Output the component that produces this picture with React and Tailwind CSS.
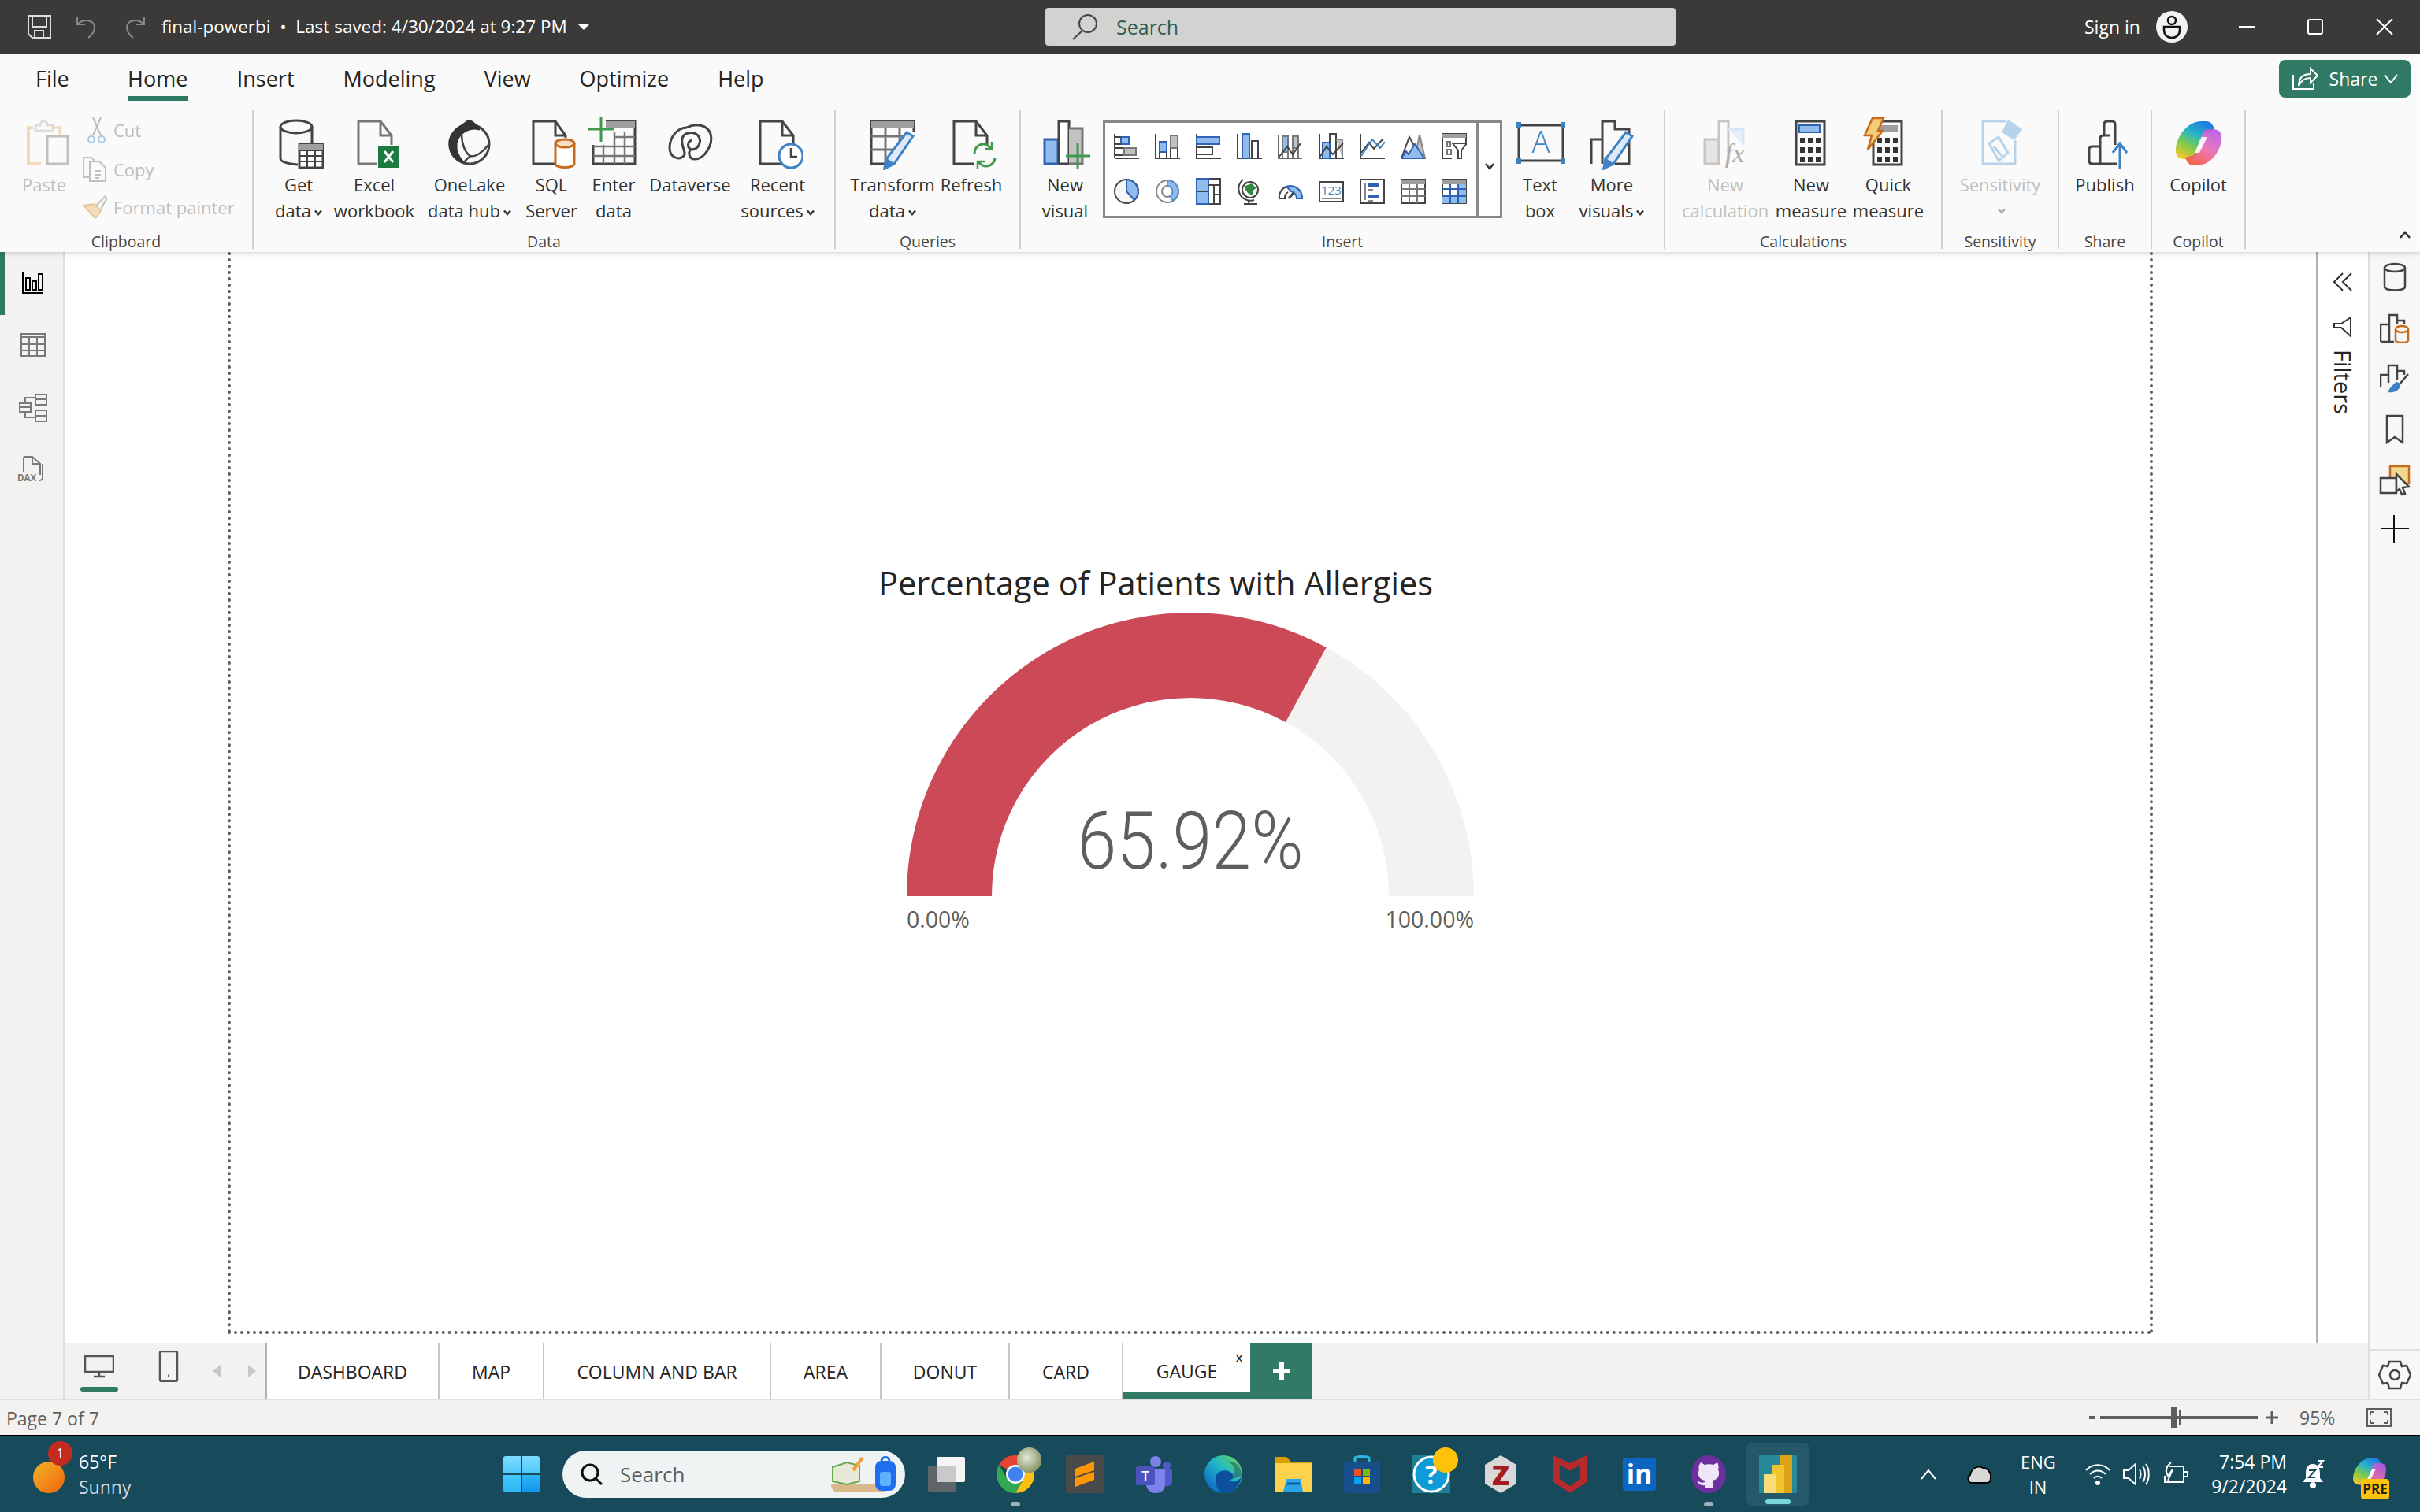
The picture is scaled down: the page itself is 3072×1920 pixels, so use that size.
const DK = "#444444";
const BL = "#2f62b5";
const LB = "#8fbcec";
const GR = "#c4c2c0";
const OR = "#c8691c";
const GN = "#3f9a4e";

function I({ children, w = 64, h = 68 }) {
    return (
        <svg width={w} height={h} viewBox={`0 0 ${w} ${h}`} fill="none" stroke={DK} strokeWidth="3" className="shrink-0">
            {children}
        </svg>
    );
}

const Doc = ({ x = 10, stroke = DK }) => (
    <path d={`M${x + 26} 60H${x}V6H${x + 28}L${x + 42} 24V36M${x + 28} 6V24H${x + 42}`} stroke={stroke} />
);

const Pencil = () => (
    <>
        <path d="M50 20L58 25L34 60L22 66L24 54Z" fill="#dbe9f8" stroke="#3e82c4" />
        <path d="M22 66L24 54L31 59Z" fill="#3e82c4" stroke="#3e82c4" />
    </>
);

function CopilotLogo({ id, size = 64 }) {
    return (
        <svg width={size} height={size} viewBox="0 0 64 64" className="shrink-0">
            <defs>
                <linearGradient id={`${id}a`} x1="0.7" y1="0" x2="0.2" y2="1">
                    <stop offset="0" stopColor="#1b7ce0" />
                    <stop offset="0.35" stopColor="#28b5c8" />
                    <stop offset="0.65" stopColor="#7ccb4c" />
                    <stop offset="1" stopColor="#f5c72a" />
                </linearGradient>
                <linearGradient id={`${id}b`} x1="0.8" y1="0" x2="0.3" y2="1">
                    <stop offset="0" stopColor="#b45ae8" />
                    <stop offset="0.5" stopColor="#ea6cb8" />
                    <stop offset="1" stopColor="#ef5a3c" />
                </linearGradient>
            </defs>
            <path d="M36 4H42C47 4 50 8 52 14L44 18C38 18 36 22 34 27L27 48C25 54 20 52 14 52C6 52 2 48 3 38C5 22 18 4 36 4Z" fill={`url(#${id}a)`} />
            <path d="M26 60C20 60 17 56 15 50L22 48C26 48 29 44 31 39L37 19C39 13 44 14 50 14C58 14 62 18 61 28C59 44 46 60 30 60Z" fill={`url(#${id}b)`} opacity="0.92" />
            <path d="M36 24H43L33 44H27Z" fill="#fff" opacity="0.9" />
        </svg>
    );
}

const GetDataIcon = () => (
    <I>
        <ellipse cx="29" cy="13" rx="20" ry="8" />
        <path d="M9 13V53C9 58 18 60 31 61M49 13V34" />
        <rect x="33" y="35" width="30" height="30" fill="#fff" />
        <rect x="33" y="35" width="30" height="8" fill="#a19f9d" stroke="none" />
        <path d="M33 43H63M33 50H63M33 57H63M43 43V65M53 43V65" strokeWidth="2" />
    </I>
);

const ExcelIcon = () => (
    <I>
        <path d="M35 60H12V6H40L54 24V36M40 6V24H54" stroke="#777" />
        <rect x="37" y="37" width="27" height="28" fill="#1f7a42" stroke="none" />
        <path d="M45 44L56 58M56 44L45 58" stroke="#fff" />
    </I>
);

const OneLakeIcon = () => (
    <I>
        <circle cx="32" cy="35" r="25" />
        <path d="M30 6C34 4 40 12 45 16C32 12 18 20 15 34C14 44 18 52 24 58C12 54 6 44 7 32C8 20 20 14 30 6Z" fill="#333" stroke="#333" />
        <path d="M22 22C22 34 26 46 33 50C40 52 50 44 56 36M34 50C30 52 26 56 26 58" strokeWidth="2.5" />
    </I>
);

const SqlIcon = () => (
    <I>
        <path d="M36 60H9V6H37L50 24V27M37 6V24H50" />
        <g stroke={OR}>
            <path d="M37 34V60C37 66 61 66 61 60V34" fill="#fff" />
            <ellipse cx="49" cy="34" rx="12" ry="5" fill="#f7e0c8" />
        </g>
    </I>
);

const EnterDataIcon = () => (
    <I>
        <path d="M6 36V60H59V6H22" />
        <rect x="22" y="6" width="37" height="8" fill="#a19f9d" stroke="none" />
        <path d="M6 38H59M6 50H59M19 36V60M33 20V60M46 20V60M33 26H59" stroke="#777" strokeWidth="2.5" />
        <path d="M0 16H32M16 1V32" stroke={GN} />
    </I>
);

const DataverseIcon = () => (
    <I>
        <path d="M28 14C38 8 54 10 58 22C62 36 50 54 38 54C30 54 30 46 32 42" />
        <path d="M28 14C16 14 6 26 6 40C6 52 18 56 24 50C28 46 20 38 22 28C24 20 36 18 42 24C48 32 42 42 34 42C28 40 28 32 34 30" />
    </I>
);

const RecentIcon = () => (
    <I>
        <Doc x={10} />
        <circle cx="49" cy="50" r="15" fill="#fff" stroke="#3e82c4" />
        <path d="M49 40V51H57" strokeWidth="2.5" />
    </I>
);

const TransformIcon = () => (
    <I>
        <path d="M22 60H5V6H59V20" />
        <rect x="5" y="6" width="54" height="8" fill="#a19f9d" stroke="none" />
        <path d="M5 25H50M5 42H36M23 14V58M41 14V36" stroke="#777" />
        <Pencil />
    </I>
);

const RefreshIcon = () => (
    <I>
        <Doc x={10} />
        <path d="M36 47C36 38 44 33 52 36L57 40M62 52C62 60 54 65 46 62L41 58" stroke={GN} fill="none" />
        <path d="M58 32V41H49M40 67V57H49" stroke={GN} strokeWidth="2.5" />
    </I>
);

const NewVisualIcon = () => (
    <I>
        <rect x="6" y="29" width="17" height="31" fill={LB} stroke={BL} />
        <path d="M24 60V6H37V60H24" fill="#fff" />
        <path d="M37 15H54V60H37" fill={GR} stroke="#777" />
        <path d="M48 34V66M33 50H64" stroke={GN} />
    </I>
);

const TextBoxIcon = () => (
    <I>
        <rect x="5" y="11" width="56" height="45" />
        <rect x="2" y="7" width="6" height="7" fill="#3e82c4" stroke="none" />
        <rect x="58" y="7" width="6" height="7" fill="#3e82c4" stroke="none" />
        <rect x="2" y="53" width="6" height="7" fill="#3e82c4" stroke="none" />
        <rect x="58" y="53" width="6" height="7" fill="#3e82c4" stroke="none" />
        <text x="33" y="46" textAnchor="middle" fontSize="38" fill="#3e82c4" stroke="none" fontFamily="Open Sans, sans-serif" fontWeight="300">A</text>
    </I>
);

const MoreVisualsIcon = () => (
    <I>
        <path d="M6 60V29H20M20 60V6H36V16H54V60H36" />
        <Pencil />
    </I>
);

const NewCalcIcon = () => (
    <I>
        <rect x="6" y="29" width="18" height="31" fill="#e6e5e4" stroke="#c8c6c4" />
        <path d="M24 60V6H36V60" stroke="#c8c6c4" />
        <path d="M36 16H55V36" stroke="#d8e4f2" fill="#e4eefa" />
        <text x="44" y="58" textAnchor="middle" fontSize="34" fontStyle="italic" fill="#b0aeac" stroke="none" fontFamily="Liberation Serif, serif">fx</text>
    </I>
);

const CalcKeys = () => (
    <g fill="#333" stroke="none">
        {[27, 39, 51].map((y) =>
            [18, 28, 38].map((x) => <rect key={`${x}-${y}`} x={x} y={y} width="6" height="7" />)
        )}
    </g>
);

const NewMeasureIcon = () => (
    <I>
        <rect x="13" y="6" width="36" height="55" />
        <rect x="17" y="11" width="26" height="9" fill={LB} stroke={BL} strokeWidth="2" />
        <CalcKeys />
    </I>
);

const QuickMeasureIcon = () => (
    <I>
        <rect x="13" y="6" width="36" height="55" />
        <rect x="22" y="11" width="22" height="8" fill="#a19f9d" stroke="none" />
        <CalcKeys />
        <path d="M12 2H26L19 18H25L6 42L11 24H2Z" fill="#f5cd78" stroke={OR} strokeWidth="2.5" />
    </I>
);

const SensitivityIcon = () => (
    <I>
        <path d="M40 6H10V60H51V30" stroke="#b7d3ec" />
        <path d="M30 26L18 34L30 56L42 46Z" stroke="#b7d3ec" />
        <path d="M24 38L34 50" stroke="#b7d3ec" />
        <path d="M42 4L60 16L50 30L34 20Z" fill="#b7d3ec" stroke="none" />
    </I>
);

const PublishIcon = () => (
    <I>
        <path d="M26 60H16C13 60 12 58 12 56V42C12 39 14 38 16 38H26M26 60V28C26 25 28 24 30 24H38M31 24V10C31 7 33 6 35 6H41C44 6 45 8 45 10V36M16 60H48" />
        <path d="M51 66V34M42 46L51 34L60 46" stroke="#3e82c4" />
    </I>
);

const PasteIcon = () => (
    <I>
        <path d="M18 14H12V60H28" stroke="#f3d9b8" strokeWidth="4" />
        <path d="M36 14H52V24" stroke="#f3d9b8" strokeWidth="3" />
        <path d="M21 18V11H27C27 4 36 4 36 11H43V18Z" fill="#fafafa" stroke="#ddd" />
        <rect x="36" y="25" width="26" height="35" stroke="#c2c0be" fill="#fafafa" />
    </I>
);

function G({ children }) {
    return (
        <svg width="32" height="34" viewBox="0 0 32 34" fill="none" stroke={DK} strokeWidth="2" className="shrink-0">
            {children}
        </svg>
    );
}

const galleryIcons = [
    <G key="1">
        <path d="M1 2V33M1 33H32" />
        <rect x="9" y="6" width="10" height="9" fill={LB} stroke={BL} />
        <path d="M1 6H9M1 15H9M1 20H13M1 29H13" />
        <rect x="13" y="20" width="15" height="9" fill={GR} stroke="#777" />
    </G>,
    <G key="2">
        <path d="M1 2V33H32" />
        <rect x="6" y="12" width="9" height="13" fill={LB} stroke={BL} />
        <path d="M6 25V33M15 25V33" />
        <rect x="20" y="4" width="9" height="16" fill={GR} stroke="#777" />
        <path d="M20 20V33M29 20V33" />
    </G>,
    <G key="3">
        <path d="M1 2V33H32" />
        <rect x="1" y="6" width="29" height="9" fill={LB} stroke={BL} />
        <path d="M1 19H21V28H1" />
    </G>,
    <G key="4">
        <path d="M1 2V33H32" />
        <rect x="7" y="2" width="9" height="31" fill={LB} stroke={BL} />
        <path d="M19 33V11H27V33" />
    </G>,
    <G key="5">
        <path d="M1 3V33H31" stroke="#666" />
        <rect x="6" y="5" width="7" height="20" fill={LB} stroke="#777" />
        <rect x="19" y="5" width="7" height="15" fill={GR} stroke="#777" />
        <path d="M6 25V33M13 25V33M19 20V33M26 20V33" stroke="#777" />
        <path d="M1 32L12 18L19 28L29 14" />
    </G>,
    <G key="6">
        <path d="M1 2V33H32" />
        <rect x="5" y="13" width="9" height="20" fill={LB} stroke={BL} />
        <path d="M14 13V2H22V33" />
        <path d="M22 9H30V33" fill={GR} stroke="#888" />
        <path d="M1 32L10 18L18 28L31 14" />
    </G>,
    <G key="7">
        <path d="M1 2V33H32" />
        <path d="M2 26L12 13L18 21L30 8" />
        <path d="M2 30L16 9L26 20L32 12" stroke="#3e82c4" />
    </G>,
    <G key="8">
        <path d="M24 3L31 33H18Z" fill={GR} stroke="#888" />
        <path d="M1 33L11 6L22 26L24 33Z" fill="#fff" />
        <path d="M1 33L7 24L10 28L18 15L30 33Z" fill={LB} stroke={BL} />
    </G>,
    <G key="9">
        <path d="M13 33H1V2H31V14" />
        <rect x="1" y="2" width="30" height="5" fill="#a19f9d" stroke="none" />
        <path d="M7 12H11V18H7ZM7 22H12V28H7Z" stroke="#777" />
        <path d="M14 14H32L25 23V33H21V23Z" fill="#fff" />
    </G>,
    <G key="10">
        <circle cx="16" cy="17" r="15" fill="#f8f8f8" />
        <path d="M16 2A15 15 0 0 1 26 28L16 17Z" fill={LB} stroke={BL} />
    </G>,
    <G key="11">
        <circle cx="16" cy="17" r="14" fill="#fff" stroke="#888" />
        <circle cx="16" cy="17" r="7" fill="#fff" stroke="#888" />
        <path d="M16 3A14 14 0 0 1 23 29L19 23A7 7 0 0 0 16 10Z" fill={LB} stroke="#5e8fc9" />
    </G>,
    <G key="12">
        <rect x="1" y="1" width="30" height="32" />
        <rect x="1" y="1" width="15" height="32" fill={LB} stroke={BL} />
        <path d="M1 17H16M16 9H31M23 9V33M23 21H31" />
    </G>,
    <G key="13">
        <path d="M8 2A15 15 0 0 0 22 28M9 33H26M15 29V33" />
        <circle cx="17" cy="15" r="10" fill="#fff" />
        <path d="M11 10L19 7L25 13L20 16L21 22L15 20L11 15Z" fill="#2f8a40" stroke="none" />
    </G>,
    <G key="14">
        <path d="M2 26A14 14 0 0 1 11 11" fill="none" />
        <path d="M11 11A15 15 0 0 1 31 26H24A9 9 0 0 0 17 17Z" fill={LB} stroke={BL} />
        <path d="M2 26H9A8 8 0 0 1 13 18" />
        <path d="M14 26L20 19" strokeWidth="3" />
    </G>,
    <G key="15">
        <rect x="1" y="5" width="30" height="25" />
        <path d="M4 26H28" stroke="#888" />
        <text x="16" y="21" textAnchor="middle" fontSize="15" fill="#3e82c4" stroke="none" fontFamily="Open Sans, sans-serif">123</text>
    </G>,
    <G key="16">
        <rect x="1" y="2" width="30" height="30" />
        <path d="M7 6V28" stroke="#888" />
        <path d="M10 9H25M10 23H25" stroke={BL} strokeWidth="4" />
        <path d="M10 15H17M10 29H17" stroke="#888" />
    </G>,
    <G key="17">
        <rect x="1" y="2" width="30" height="30" />
        <rect x="1" y="2" width="30" height="6" fill="#a19f9d" stroke="none" />
        <path d="M1 14H31M1 23H31M11 8V32M21 8V32" stroke="#777" />
    </G>,
    <G key="18">
        <rect x="1" y="2" width="30" height="30" />
        <rect x="1" y="2" width="30" height="6" fill="#a19f9d" stroke="none" />
        <rect x="21" y="8" width="10" height="24" fill={LB} stroke="none" />
        <rect x="1" y="23" width="30" height="9" fill={LB} stroke="none" />
        <path d="M1 14H31M1 23H31M11 8V32M21 8V32" stroke={BL} />
    </G>,
];

function Chev({ color = "#333" }) {
    return (
        <svg width="10" height="8" viewBox="0 0 10 8" fill="none" stroke={color} strokeWidth="2.5" className="ml-1 inline-block">
            <path d="M1 1.5L5 6L9 1.5" />
        </svg>
    );
}

function RibbonBtn({ w, icon, line1, line2, caret, disabled }) {
    return (
        <div className={`flex flex-col items-center shrink-0 pt-2 text-[22px] leading-[33px] whitespace-nowrap ${disabled ? "text-[#c0bebc]" : "text-[#323130]"}`} style={{ width: w }}>
            {icon}
            <div className="mt-[2px]">{line1}</div>
            <div>
                {line2}
                {caret && <Chev />}
            </div>
        </div>
    );
}

function Group({ w, label, children, className = "" }) {
    return (
        <div className="flex flex-col h-[176px] shrink-0 border-r-2 border-[#d2d0ce]" style={{ width: w }}>
            <div className={`flex h-[150px] ${className}`}>{children}</div>
            <div className="h-[26px] text-center text-[19.5px] leading-[34px] text-[#484644] whitespace-nowrap">{label}</div>
        </div>
    );
}

function ClipRow({ icon, label, h = "h-[50px]" }) {
    return (
        <div className={`flex items-center ${h} text-[22px] text-[#c0bebc] whitespace-nowrap`}>
            <div className="w-[40px] flex">{icon}</div>
            {label}
        </div>
    );
}

function TitleBar() {
    return (
        <div className="flex items-center h-[68px] bg-[#3b3a39] text-white shrink-0">
            <div className="flex items-center w-[1327px] shrink-0">
                <svg width="30" height="30" viewBox="0 0 30 30" fill="none" stroke="#ddd" strokeWidth="2" className="ml-[35px]">
                    <path d="M1 1H29V29H6L1 24ZM6 1V15H24V1M9 29V20H20V29" />
                </svg>
                <svg width="28" height="30" viewBox="0 0 28 30" fill="none" stroke="#8a8886" strokeWidth="2" className="ml-[31px]">
                    <path d="M2 2V12H12M2 12C10 4 24 6 24 16C24 22 20 26 16 29" />
                </svg>
                <svg width="28" height="30" viewBox="0 0 28 30" fill="none" stroke="#8a8886" strokeWidth="2" className="ml-[33px]">
                    <path d="M26 2V12H16M26 12C18 4 4 6 4 16C4 22 8 26 12 29" />
                </svg>
                <span className="ml-[20px] text-[22.5px] whitespace-nowrap">final-powerbi&nbsp;&nbsp;•&nbsp;&nbsp;Last saved: 4/30/2024 at 9:27 PM</span>
                <svg width="16" height="8" viewBox="0 0 16 8" className="ml-[13px]">
                    <path d="M0 0H16L8 8Z" fill="#fff" />
                </svg>
            </div>
            <div className="flex items-center w-[800px] h-[48px] bg-[#d2d2d0] rounded-[4px] shrink-0">
                <svg width="36" height="34" viewBox="0 0 36 34" fill="none" stroke="#444" strokeWidth="2" className="ml-[32px]">
                    <circle cx="22" cy="13" r="11" />
                    <path d="M15 22L3 33" />
                </svg>
                <span className="ml-[22px] mt-[2px] text-[25px] text-[#2f5f50]">Search</span>
            </div>
            <div className="flex items-center flex-1 text-[23px]">
                <span className="ml-[519px] whitespace-nowrap">Sign in</span>
                <div className="ml-[20px] w-[40px] h-[40px] rounded-full bg-[#f3f2f1] flex items-center justify-center shrink-0">
                    <svg width="24" height="32" viewBox="0 0 24 32" fill="none" stroke="#111" strokeWidth="2.5">
                        <circle cx="12" cy="8" r="5" />
                        <path d="M2 16H22V20C22 26 18 30 12 30C6 30 2 26 2 20Z" />
                    </svg>
                </div>
                <svg width="20" height="3" viewBox="0 0 20 3" className="ml-[65px]"><rect width="20" height="3" fill="#fff" /></svg>
                <svg width="20" height="20" viewBox="0 0 20 20" fill="none" stroke="#fff" strokeWidth="2" className="ml-[67px]"><rect x="1" y="1" width="18" height="18" rx="2" /></svg>
                <svg width="22" height="22" viewBox="0 0 22 22" fill="none" stroke="#fff" strokeWidth="2" className="ml-[67px]"><path d="M1 1L21 21M21 1L1 21" /></svg>
            </div>
        </div>
    );
}

function MenuRow() {
    return (
        <div className="flex h-[72px] items-start relative">
            <div className="flex items-start pt-[14px] pl-[45px] gap-[62px] text-[27px] leading-[36px] text-[#252423]">
                <span>File</span>
                <div className="flex flex-col items-center ml-[12px]">
                    <span className="font-medium">Home</span>
                    <div className="w-[77px] h-[6px] mt-[4px] bg-[#2f7a65]" />
                </div>
                <span>Insert</span>
                <span>Modeling</span>
                <span>View</span>
                <span>Optimize</span>
                <span>Help</span>
            </div>
            <div className="ml-auto mt-[8px] mr-[12px] w-[167px] h-[48px] rounded-[8px] bg-[#317a65] flex items-center justify-center text-white text-[23px]">
                <svg width="34" height="30" viewBox="0 0 34 30" fill="none" stroke="#fff" strokeWidth="2" className="mr-[14px]">
                    <path d="M2 10V28H28V20M9 24C9 14 14 9 24 9V2L33 11L24 20V14C17 14 12 17 9 24Z" />
                </svg>
                Share
                <svg width="18" height="12" viewBox="0 0 18 12" fill="none" stroke="#fff" strokeWidth="2" className="ml-[8px]">
                    <path d="M1 1L9 11L17 1" />
                </svg>
            </div>
        </div>
    );
}

function Ribbon() {
    return (
        <div className="relative z-10 h-[252px] bg-[#fafafa] shadow-[0_2px_6px_rgba(0,0,0,0.16)] shrink-0">
            <MenuRow />
            <div className="flex">
                <Group w={322} label="Clipboard" className="pl-[18px]">
                    <RibbonBtn w={76} icon={<PasteIcon />} line1="Paste" disabled />
                    <div className="flex flex-col ml-[10px]">
                        <ClipRow
                            label="Cut"
                            icon={
                                <svg width="26" height="34" viewBox="0 0 26 34" fill="none" stroke="#bbb" strokeWidth="2" className="ml-[6px]">
                                    <path d="M8 1L18 24M18 1L8 24" />
                                    <circle cx="6" cy="29" r="4" stroke="#a9c8e8" />
                                    <circle cx="19" cy="29" r="4" stroke="#a9c8e8" />
                                </svg>
                            }
                        />
                        <ClipRow
                            label="Copy"
                            icon={
                                <svg width="32" height="32" viewBox="0 0 32 32" fill="none" stroke="#c2c0be" strokeWidth="2">
                                    <path d="M10 26H2V1H12L16 5M10 6H22L30 14V31H10Z" />
                                    <path d="M16 18H24M16 23H24M16 27H22" />
                                </svg>
                            }
                        />
                        <ClipRow
                            h="h-[46px]"
                            label="Format painter"
                            icon={
                                <svg width="32" height="30" viewBox="0 0 32 30" fill="none" stroke="#c2c0be" strokeWidth="2">
                                    <path d="M30 1L17 14L23 19L31 5Z" />
                                    <path d="M2 13L16 11L24 20L17 29Z" fill="#f5dcbc" stroke="#e8c59c" />
                                </svg>
                            }
                        />
                    </div>
                </Group>
                <Group w={739} label="Data" className="pl-[8px]">
                    <RibbonBtn w={98} icon={<GetDataIcon />} line1="Get" line2="data" caret />
                    <RibbonBtn w={94} icon={<ExcelIcon />} line1="Excel" line2="workbook" />
                    <RibbonBtn w={148} icon={<OneLakeIcon />} line1="OneLake" line2="data hub" caret />
                    <RibbonBtn w={60} icon={<SqlIcon />} line1="SQL" line2="Server" />
                    <RibbonBtn w={98} icon={<EnterDataIcon />} line1="Enter" line2="data" />
                    <RibbonBtn w={96} icon={<DataverseIcon />} line1="Dataverse" />
                    <RibbonBtn w={126} icon={<RecentIcon />} line1="Recent" line2="sources" caret />
                </Group>
                <Group w={235} label="Queries">
                    <RibbonBtn w={144} icon={<TransformIcon />} line1="Transform" line2="data" caret />
                    <RibbonBtn w={56} icon={<RefreshIcon />} line1="Refresh" />
                </Group>
                <Group w={818} label="Insert" className="pl-[8px]">
                    <RibbonBtn w={96} icon={<NewVisualIcon />} line1="New" line2="visual" />
                    <div className="flex mt-[13px] w-[507px] h-[124px] border-[3px] border-[#8a8886] bg-white shrink-0">
                        <div className="grid grid-cols-[repeat(9,52px)] grid-rows-[58px_58px] w-[471px] pl-px items-center justify-items-center">
                            {galleryIcons}
                        </div>
                        <div className="flex-1 border-l-[3px] border-[#8a8886] flex items-center justify-center pb-2">
                            <svg width="14" height="10" viewBox="0 0 14 10" fill="none" stroke="#333" strokeWidth="2.5"><path d="M2 2L7 8L12 2" /></svg>
                        </div>
                    </div>
                    <RibbonBtn w={96} icon={<TextBoxIcon />} line1="Text" line2="box" />
                    <RibbonBtn w={86} icon={<MoreVisualsIcon />} line1="More" line2="visuals" caret />
                </Group>
                <Group w={352} label="Calculations">
                    <RibbonBtn w={152} icon={<NewCalcIcon />} line1="New" line2="calculation" disabled />
                    <RibbonBtn w={66} icon={<NewMeasureIcon />} line1="New" line2="measure" />
                    <RibbonBtn w={130} icon={<QuickMeasureIcon />} line1="Quick" line2="measure" />
                </Group>
                <Group w={148} label="Sensitivity">
                    <div className="flex flex-col items-center w-full pt-2 text-[22px] leading-[33px] text-[#c0bebc]">
                        <SensitivityIcon />
                        <div className="mt-[2px]">Sensitivity</div>
                        <div className="h-[33px] flex items-center"><Chev color="#b0aeac" /></div>
                    </div>
                </Group>
                <Group w={118} label="Share">
                    <RibbonBtn w={116} icon={<PublishIcon />} line1="Publish" />
                </Group>
                <Group w={119} label="Copilot">
                    <RibbonBtn w={117} icon={<div className="h-[68px] pt-[2px]"><CopilotLogo id="cp1" /></div>} line1="Copilot" />
                </Group>
                <div className="flex-1 flex justify-end items-end pr-[11px] pb-[12px] h-[176px]">
                    <svg width="16" height="12" viewBox="0 0 16 12" fill="none" stroke="#333" strokeWidth="2.5"><path d="M2 10L8 3L14 10" /></svg>
                </div>
            </div>
        </div>
    );
}

function LeftRail() {
    return (
        <div className="w-[82px] shrink-0 border-r-2 border-[#e1dfdd] bg-[#f3f2f1] flex flex-col">
            <div className="h-[80px] border-l-[6px] border-[#2f7a65] flex items-center pl-[22px]">
                <svg width="28" height="28" viewBox="0 0 28 28" fill="none" stroke="#000" strokeWidth="2">
                    <path d="M1 0V26H27M5 7H10V22H5ZM13 11H18V22H13ZM21 2H26V22H21Z" />
                </svg>
            </div>
            <div className="h-[80px] flex items-center pl-[26px] -mt-[2px]">
                <svg width="32" height="30" viewBox="0 0 32 30" fill="none" stroke="#7a7977" strokeWidth="2">
                    <rect x="1" y="1" width="30" height="28" />
                    <path d="M1 5H31M1 14H31M1 22H31M11 5V29M21 5V29" />
                </svg>
            </div>
            <div className="h-[80px] flex items-center pl-[24px]">
                <svg width="36" height="36" viewBox="0 0 36 36" fill="none" stroke="#7a7977" strokeWidth="2">
                    <path d="M1 12H15V23H1ZM1 17H15M21 1H35V14H21ZM21 7H35M21 21H35V35H21ZM21 28H35M8 12V5H21M8 23V30H21" />
                </svg>
            </div>
            <div className="h-[80px] flex items-center pl-[21px]">
                <svg width="38" height="38" viewBox="0 0 38 38" fill="none" stroke="#7a7977" strokeWidth="2">
                    <path d="M9 20V3C9 2 10 1 11 1H20L30 10V24M20 1V10H30M33 10V28C33 30 31 31 28 31" />
                    <text x="1" y="32" fontSize="11.5" fontWeight="700" fill="#7a7977" stroke="none" fontFamily="Open Sans, sans-serif">DAX</text>
                </svg>
            </div>
        </div>
    );
}

function GaugeChart() {
    return (
        <div className="flex flex-col items-center w-[720px]">
            <div className="mr-[88px] text-[41.6px] leading-[56px] text-[#252423] whitespace-nowrap">Percentage of Patients with Allergies</div>
            <div className="relative mt-[10px] w-[720px] h-[360px]">
                <svg width="720" height="360" viewBox="0 0 720 360">
                    <path d="M0 360A360 360 0 0 1 720 360H612A252 252 0 0 0 108 360Z" fill="#f3f2f1" />
                    <path d="M0 360A360 360 0 0 1 532.6 44.2L480.9 139A252 252 0 0 0 108 360Z" fill="#cc4a58" />
                </svg>
                <div className="absolute inset-x-0 top-[230px] text-center text-[102px] leading-[120px] font-light text-[#605e5c] font-['Roboto',sans-serif] scale-x-[0.88]">65.92%</div>
            </div>
            <div className="flex justify-between w-full mt-[11px] text-[28.5px] leading-[36px] text-[#605e5c]">
                <span>0.00%</span>
                <span>100.00%</span>
            </div>
        </div>
    );
}

function FilterPanel() {
    return (
        <div className="w-[66px] shrink-0 border-l-2 border-[#b3b0ad] bg-white flex flex-col items-center pt-[26px]">
            <svg width="24" height="24" viewBox="0 0 24 24" fill="none" stroke="#333" strokeWidth="2">
                <path d="M12 1L1 12L12 23M23 1L12 12L23 23" />
            </svg>
            <svg width="24" height="26" viewBox="0 0 24 26" fill="none" stroke="#333" strokeWidth="2" className="mt-[32px]">
                <path d="M22 1V25L10 14H1V9H10Z" />
            </svg>
            <div className="mt-[16px] text-[29px] font-medium text-[#252423] [writing-mode:vertical-rl] leading-[29px]">Filters</div>
        </div>
    );
}

function RightRail() {
    return (
        <div className="w-[66px] shrink-0 border-l-2 border-[#e1dfdd] bg-[#f8f7f6] flex flex-col items-center">
            <svg width="30" height="38" viewBox="0 0 30 38" fill="none" stroke="#444" strokeWidth="2.5" className="mt-[13px]">
                <ellipse cx="15" cy="7" rx="13" ry="5" />
                <path d="M2 7V31C2 37 28 37 28 31V7" />
            </svg>
            <svg width="38" height="38" viewBox="0 0 38 38" fill="none" stroke="#444" strokeWidth="2.5" className="mt-[27px]">
                <path d="M1 36V14H12M12 36V2H22V14M1 36H18M22 9H31V13" />
                <ellipse cx="28" cy="20" rx="8" ry="4" stroke={OR} />
                <path d="M20 20V34C20 38 36 38 36 34V20" stroke={OR} />
            </svg>
            <svg width="38" height="38" viewBox="0 0 38 38" fill="none" stroke="#444" strokeWidth="2.5" className="mt-[26px]">
                <path d="M1 30V14H11M11 24V2H22V20M22 9H31V14" />
                <path d="M36 13L24 27" />
                <path d="M12 35C18 35 24 33 25 26L21 24C18 28 14 30 12 35Z" fill="#3e82c4" stroke="#3e82c4" />
            </svg>
            <svg width="24" height="38" viewBox="0 0 24 38" fill="none" stroke="#444" strokeWidth="2.5" className="mt-[26px]">
                <path d="M2 2H22V36L12 29L2 36Z" />
            </svg>
            <svg width="40" height="40" viewBox="0 0 40 40" fill="none" stroke="#444" strokeWidth="2.5" className="mt-[26px]">
                <rect x="14" y="2" width="24" height="22" fill="#f3d98f" stroke={OR} />
                <rect x="2" y="17" width="20" height="19" fill="#f8f7f6" />
                <path d="M22 12L38 28L30 29L33 37L29 38L26 31L22 34Z" fill="#f8f7f6" />
            </svg>
            <svg width="36" height="36" viewBox="0 0 36 36" stroke="#111" strokeWidth="2" className="mt-[24px]">
                <path d="M0 17H36M17 0V36" />
            </svg>
            <div className="mt-auto w-full h-[63px] border-t-2 border-[#e1dfdd] flex items-center justify-center">
                <svg width="42" height="38" viewBox="0 0 42 38" fill="none" stroke="#444" strokeWidth="2.5">
                    <path d="M14 2H28L30 8L36 7L41 19L36 30L30 29L28 36H14L12 29L6 30L1 19L6 7L12 8Z" />
                    <circle cx="21" cy="19" r="6" />
                </svg>
            </div>
        </div>
    );
}

const tabs = [
    ["DASHBOARD", 219],
    ["MAP", 133],
    ["COLUMN AND BAR", 288],
    ["AREA", 140],
    ["DONUT", 163],
    ["CARD", 144],
];

function TabsRow() {
    return (
        <div className="flex h-[70px] shrink-0 bg-[#f3f2f1]">
            <div className="w-[255px] flex items-start shrink-0">
                <div className="ml-[20px] w-[48px] flex flex-col items-center mt-[14px]">
                    <svg width="38" height="30" viewBox="0 0 38 30" fill="none" stroke="#555" strokeWidth="2.5">
                        <path d="M1 2H37V22H1ZM19 22V28M12 28H26" />
                    </svg>
                    <div className="w-[48px] h-[6px] mt-[11px] rounded-full bg-[#317a65]" />
                </div>
                <svg width="26" height="40" viewBox="0 0 26 40" fill="none" stroke="#555" strokeWidth="2.5" className="ml-[51px] mt-[9px]">
                    <rect x="2" y="1" width="22" height="38" rx="2" />
                    <path d="M12 32H14" strokeWidth="3" />
                </svg>
                <svg width="10" height="16" viewBox="0 0 10 16" className="ml-[43px] mt-[27px]"><path d="M10 0V16L0 8Z" fill="#c8c6c4" /></svg>
                <svg width="10" height="16" viewBox="0 0 10 16" className="ml-[35px] mt-[27px]"><path d="M0 0V16L10 8Z" fill="#c8c6c4" /></svg>
            </div>
            <div className="flex h-full bg-white border-l-2 border-[#b3b0ad]">
                {tabs.map(([name, w]) => (
                    <div key={name} className="flex items-center justify-center pt-[2px] border-r-2 border-[#c8c6c4] text-[23px] text-[#252423] whitespace-nowrap" style={{ width: w }}>
                        {name}
                    </div>
                ))}
                <div className="relative w-[161px] flex items-center justify-center pt-[8px] border-b-[8px] border-b-[#317a65] text-[23px] text-[#252423] font-medium">
                    GAUGE
                    <span className="absolute right-[9px] top-[5px] text-[19px] font-medium leading-[24px]">x</span>
                </div>
            </div>
            <div className="w-[79px] bg-[#317a65] flex items-center justify-center">
                <svg width="22" height="22" viewBox="0 0 22 22" stroke="#fff" strokeWidth="6"><path d="M0 11H22M11 0V22" /></svg>
            </div>
        </div>
    );
}

function StatusBar() {
    return (
        <div className="flex items-center h-[46px] shrink-0 border-t-2 border-[#e1dfdd] bg-[#f3f2f1] text-[23px] text-[#605e5c]">
            <span className="ml-[8px] mt-[2px]">Page 7 of 7</span>
            <div className="ml-auto flex items-center">
                <div className="w-[8px] h-[4px] bg-[#605e5c]" />
                <div className="relative ml-[6px] w-[200px] h-[4px] bg-[#605e5c]">
                    <div className="absolute left-[90px] top-[-11px] w-[8px] h-[26px] bg-[#605e5c]" />
                    <div className="absolute left-[100px] top-[-8px] w-[2px] h-[20px] bg-[#605e5c]" />
                </div>
                <svg width="16" height="16" viewBox="0 0 16 16" stroke="#605e5c" strokeWidth="3" className="ml-[10px]"><path d="M0 8H16M8 0V16" /></svg>
                <span className="ml-[27px] w-[46px]">95%</span>
                <svg width="32" height="24" viewBox="0 0 32 24" fill="none" stroke="#605e5c" strokeWidth="2" className="ml-[39px] mr-[36px]">
                    <rect x="1" y="1" width="30" height="22" />
                    <path d="M5 9V5H10M22 5H27V9M27 15V19H22M10 19H5V15" />
                </svg>
            </div>
        </div>
    );
}

const Chrome = () => (
    <svg width="48" height="48" viewBox="0 0 48 48">
        <path d="M3.2 12A24 24 0 0 1 44.8 12H24A12 12 0 0 0 13.6 18Z" fill="#e94335" />
        <path d="M44.8 12A24 24 0 0 1 24 48L34.4 30A12 12 0 0 0 24 12Z" fill="#fbc012" />
        <path d="M24 48A24 24 0 0 1 3.2 12L13.6 30A12 12 0 0 0 34.4 30Z" fill="#32a853" />
        <circle cx="24" cy="24" r="12" fill="#fff" />
        <circle cx="24" cy="24" r="9.5" fill="#3f82f0" />
    </svg>
);

const taskIcons = [
    {
        key: "taskview",
        el: (
            <svg width="48" height="48" viewBox="0 0 48 48">
                <rect x="12" y="2" width="36" height="32" rx="2" fill="#f5f5f5" />
                <rect x="1" y="14" width="36" height="32" rx="2" fill="#6a6a6a" fillOpacity="0.85" />
                <rect x="12" y="14" width="25" height="20" fill="#c9c9c9" />
            </svg>
        ),
    },
    {
        key: "chrome",
        el: (
            <div className="relative">
                <Chrome />
                <div className="absolute left-[26px] top-[-10px] w-[31px] h-[32px] rounded-full bg-[radial-gradient(circle_at_40%_40%,#e2e6d8,#68793f)]" />
            </div>
        ),
        dot: true,
    },
    {
        key: "sublime",
        el: (
            <svg width="48" height="48" viewBox="0 0 48 48">
                <rect width="48" height="48" rx="3" fill="#4a4a4a" />
                <path d="M36 8V19L12 27V17ZM12 29L36 21V31L12 40Z" fill="#ff9800" />
            </svg>
        ),
    },
    {
        key: "teams",
        el: (
            <svg width="48" height="48" viewBox="0 0 48 48">
                <circle cx="26" cy="8" r="7" fill="#7b83eb" />
                <circle cx="40" cy="13" r="5" fill="#5059c9" />
                <path d="M33 18H47V33C47 38 42 40 38 39Z" fill="#5059c9" />
                <path d="M14 18H38V37C38 44 33 48 26 48C19 48 14 43 14 37Z" fill="#7b83eb" />
                <rect x="1" y="14" width="24" height="24" rx="2" fill="#4b53bc" />
                <text x="13" y="32" textAnchor="middle" fontSize="17" fontWeight="600" fill="#fff" fontFamily="Open Sans, sans-serif">T</text>
            </svg>
        ),
    },
    {
        key: "edge",
        el: (
            <svg width="48" height="48" viewBox="0 0 48 48">
                <defs>
                    <linearGradient id="edg" x1="0.9" y1="0" x2="0.1" y2="0.8">
                        <stop offset="0" stopColor="#6cd45a" />
                        <stop offset="0.5" stopColor="#1fb6c8" />
                        <stop offset="1" stopColor="#0f6fc4" />
                    </linearGradient>
                </defs>
                <circle cx="24" cy="24" r="24" fill="url(#edg)" />
                <path d="M14 30C14 18 30 16 36 24C38 28 34 32 30 32C40 36 46 30 47 26C46 38 36 48 24 48C18 48 14 40 14 30Z" fill="#0c4f9c" />
                <path d="M47 26C47 12 37 6 28 8C36 10 40 16 38 24C36 30 32 33 30 32Z" fill="#174a5b" fillOpacity="0.5" />
            </svg>
        ),
    },
    {
        key: "explorer",
        el: (
            <svg width="48" height="48" viewBox="0 0 48 48">
                <path d="M1 2H16L22 8H48V47H1Z" fill="#d99f00" />
                <path d="M1 10H48V46H1Z" fill="#ffd24d" />
                <path d="M16 30H34L37 46H12Z" fill="#29a4e8" />
                <path d="M17 36H33" stroke="#0b5c9c" strokeWidth="3" />
            </svg>
        ),
    },
    {
        key: "store",
        el: (
            <svg width="48" height="48" viewBox="0 0 48 48">
                <path d="M15 10V3C15 1 33 1 33 3V10" fill="none" stroke="#2ab7e8" strokeWidth="3" />
                <path d="M1 8H47V43C47 46 45 48 42 48H6C3 48 1 46 1 43Z" fill="#174f8c" />
                <rect x="14" y="17" width="9" height="9" fill="#f25022" />
                <rect x="25" y="17" width="9" height="9" fill="#7fba00" />
                <rect x="14" y="28" width="9" height="9" fill="#00a4ef" />
                <rect x="25" y="28" width="9" height="9" fill="#ffb900" />
            </svg>
        ),
    },
    {
        key: "help",
        el: (
            <div className="relative">
                <svg width="48" height="48" viewBox="0 0 48 48">
                    <rect width="48" height="48" fill="#1f7f97" />
                    <circle cx="24" cy="24" r="22" fill="#0f9bd7" stroke="#fff" strokeWidth="3" />
                    <text x="24" y="36" textAnchor="middle" fontSize="32" fontWeight="700" fill="#fff" fontFamily="Open Sans, sans-serif">?</text>
                </svg>
                <div className="absolute left-[26px] top-[-10px] w-[32px] h-[32px] rounded-full bg-[#ffc20a]" />
            </div>
        ),
    },
    {
        key: "zip",
        el: (
            <svg width="40" height="48" viewBox="0 0 40 48">
                <path d="M20 0L40 12V36L20 48L0 36V12Z" fill="#d8d8d8" />
                <text x="20" y="38" textAnchor="middle" fontSize="36" fontWeight="800" fill="#a61c1c" fontFamily="Open Sans, sans-serif">Z</text>
            </svg>
        ),
    },
    {
        key: "mcafee",
        el: (
            <svg width="42" height="48" viewBox="0 0 42 48">
                <path d="M0 0L21 10L42 0V34L21 48L0 34ZM8 12V30L21 39L34 30V12L21 20Z" fill="#b52b2b" fillRule="evenodd" />
            </svg>
        ),
    },
    {
        key: "linkedin",
        el: (
            <div className="w-[42px] h-[42px] rounded-[3px] bg-[#0a66c2] text-white text-[34px] leading-[40px] font-bold text-center font-['Open_Sans',sans-serif]">in</div>
        ),
    },
    {
        key: "github",
        el: (
            <svg width="46" height="48" viewBox="0 0 46 48">
                <ellipse cx="23" cy="24" rx="22" ry="24" fill="#6e2f9e" />
                <path d="M13 9L18 12C21 11 26 11 29 12L34 9C36 13 36 16 35 18C38 24 35 31 28 32V42H18V38C13 39 10 36 8 32C11 33 13 36 18 34V32C11 31 8 24 11 18C10 16 10 13 13 9Z" fill="#f1e6f8" />
            </svg>
        ),
        dot: true,
    },
];

function Taskbar() {
    return (
        <div className="flex items-center h-[98px] shrink-0 border-t-2 border-black bg-[#174a5b] text-white text-[23px]">
            <div className="flex items-center w-[639px] shrink-0 relative">
                <div className="ml-[42px] w-[40px] h-[40px] mt-[8px] rounded-full bg-gradient-to-br from-[#f0b429] to-[#ef5f0a]" />
                <div className="absolute left-[61px] top-[-10px] w-[31px] h-[31px] rounded-full bg-[#c42b1c] text-center text-[18px] leading-[31px]">1</div>
                <div className="ml-[18px] leading-[32px]">
                    <div>65°F</div>
                    <div className="text-[#cfd8dc]">Sunny</div>
                </div>
            </div>
            <div className="grid grid-cols-2 gap-[2px] w-[46px] h-[46px] shrink-0">
                <div className="rounded-tl-[3px] bg-gradient-to-b from-[#7cdcff] to-[#4fc7fb]" />
                <div className="rounded-tr-[3px] bg-gradient-to-b from-[#7cdcff] to-[#4fc7fb]" />
                <div className="rounded-bl-[3px] bg-gradient-to-b from-[#45c8fd] to-[#2fb4f6]" />
                <div className="rounded-br-[3px] bg-gradient-to-b from-[#2fb4f6] to-[#0f94f0]" />
            </div>
            <div className="flex items-center ml-[29px] w-[435px] h-[60px] rounded-[30px] bg-[#f0f3f4] shrink-0">
                <svg width="30" height="30" viewBox="0 0 30 30" fill="none" stroke="#111" strokeWidth="3" className="ml-[22px]">
                    <circle cx="13" cy="13" r="10" />
                    <path d="M20 20L28 28" />
                </svg>
                <span className="ml-[21px] text-[26px] text-[#5e5e5e]">Search</span>
                <svg width="92" height="54" viewBox="0 0 92 54" className="ml-auto mr-[4px]">
                    <path d="M2 40H76C76 48 70 50 64 50H10C6 50 2 46 2 40Z" fill="#d9b98a" />
                    <path d="M4 18L22 12L38 16V36L22 40L4 36Z" fill="#e8e8d8" stroke="#6aa84f" strokeWidth="2" />
                    <path d="M30 22L42 6" stroke="#f0a030" strokeWidth="4" />
                    <rect x="58" y="10" width="26" height="38" rx="8" fill="#1e6ff0" />
                    <rect x="64" y="24" width="14" height="18" rx="3" fill="#5fb0ff" />
                    <path d="M66 10C66 4 76 4 76 10" fill="none" stroke="#1e6ff0" strokeWidth="3" />
                </svg>
            </div>
            <div className="flex items-center ml-[8px] shrink-0">
                {taskIcons.map((t) => (
                    <div key={t.key} className="relative w-[88px] h-[96px] flex items-center justify-center">
                        {t.el}
                        {t.dot && <div className="absolute bottom-[7px] left-[38px] w-[12px] h-[6px] rounded-full bg-[#9bb4bc]" />}
                    </div>
                ))}
                <div className="relative w-[80px] h-[80px] ml-[4px] rounded-[8px] bg-[#25596a] flex items-center justify-center">
                    <svg width="48" height="48" viewBox="0 0 48 48">
                        <rect width="48" height="48" fill="#26899a" />
                        <rect x="26" y="0" width="16" height="48" fill="#dca318" />
                        <rect x="16" y="12" width="16" height="36" fill="#f0c52f" />
                        <rect x="6" y="24" width="16" height="24" fill="#f7dc78" />
                    </svg>
                    <div className="absolute bottom-[2px] left-[24px] w-[32px] h-[6px] rounded-full bg-[#76d6dc]" />
                </div>
            </div>
            <div className="flex items-center flex-1">
                <svg width="22" height="14" viewBox="0 0 22 14" fill="none" stroke="#fff" strokeWidth="2" className="ml-[140px]"><path d="M2 13L11 2L20 13" /></svg>
                <svg width="32" height="24" viewBox="0 0 32 24" className="ml-[38px]">
                    <path d="M6 23C1 23 0 16 4 13C5 5 14 0 20 4C26 4 31 10 30 17C30 21 28 23 25 23Z" fill="#d8d8d8" stroke="#000" strokeWidth="2" />
                </svg>
                <div className="ml-[36px] w-[44px] text-center leading-[32px] text-[22px]">
                    <div>ENG</div>
                    <div>IN</div>
                </div>
                <svg width="32" height="28" viewBox="0 0 32 28" fill="none" stroke="#fff" strokeWidth="2" className="ml-[38px]">
                    <path d="M1 9C9 0 23 0 31 9M6 14C12 8 20 8 26 14M11 19C14 16 18 16 21 19" />
                    <circle cx="16" cy="25" r="2" fill="#fff" />
                </svg>
                <svg width="34" height="30" viewBox="0 0 34 30" fill="none" stroke="#fff" strokeWidth="2" className="ml-[16px]">
                    <path d="M1 10H7L16 2V28L7 20H1ZM21 9C23 12 23 18 21 21M25 5C29 10 29 20 25 25M29 2C34 9 34 21 29 28" />
                </svg>
                <svg width="34" height="32" viewBox="0 0 34 32" fill="none" stroke="#fff" strokeWidth="2" className="ml-[15px]">
                    <path d="M10 6H28V26H4V18M28 13H33V19H28" />
                    <path d="M12 1C6 6 4 12 8 18L14 10L8 24" />
                </svg>
                <div className="ml-auto text-right leading-[31px] text-[23px] whitespace-nowrap">
                    <div>7:54 PM</div>
                    <div>9/2/2024</div>
                </div>
                <svg width="30" height="38" viewBox="0 0 30 38" className="ml-[18px]">
                    <path d="M15 6C8 6 6 12 6 18V24L2 29H28L24 24V18C24 12 22 6 15 6Z" fill="#fff" />
                    <circle cx="15" cy="33" r="4" fill="#fff" />
                    <path d="M10 14H18L10 23H18" fill="none" stroke="#174a5b" strokeWidth="2" />
                    <path d="M21 2H28L21 10H28" fill="none" stroke="#fff" strokeWidth="2" />
                </svg>
                <div className="relative ml-[34px] mr-[41px] w-[46px] h-[48px]">
                    <CopilotLogo id="cp2" size={46} />
                    <div className="absolute right-[-2px] bottom-[-8px] w-[36px] h-[26px] rounded-[4px] bg-[#ffc20a] text-[#222] text-[17px] font-bold leading-[26px] text-center">PRE</div>
                </div>
            </div>
        </div>
    );
}

export default function App() {
    return (
        <div className="flex flex-col w-[3072px] h-[1920px] overflow-hidden bg-[#f3f2f1] font-['Open_Sans','Noto_Sans',sans-serif]">
            <TitleBar />
            <Ribbon />
            <div className="flex flex-1 min-h-0">
                <LeftRail />
                <div className="flex flex-col flex-1 min-w-0">
                    <div className="flex flex-1 min-h-0">
                        <div className="flex-1 bg-white">
                            <div className="flex flex-col items-center ml-[207px] w-[2444px] h-[1374px] pt-[392px] border-[4px] border-t-0 border-dotted border-[#605e5c]">
                                <GaugeChart />
                            </div>
                        </div>
                        <FilterPanel />
                    </div>
                    <TabsRow />
                </div>
                <RightRail />
            </div>
            <StatusBar />
            <Taskbar />
        </div>
    );
}
